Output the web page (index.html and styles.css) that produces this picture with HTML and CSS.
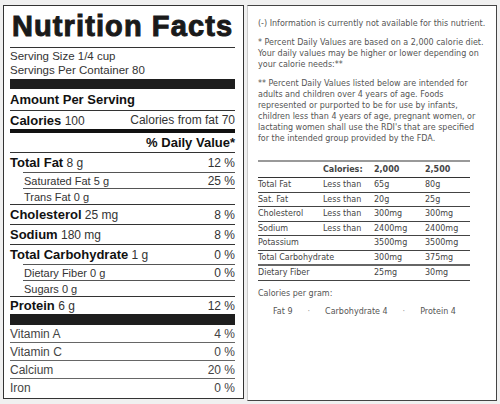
FILE: index.html
```html
<!DOCTYPE html>
<html lang="en">
<head>
    <meta charset="UTF-8">
    <meta name="viewport" content="width=device-width, initial-scale=1.0">
    <title>Nutrition Facts</title>
    <link rel="stylesheet" href="styles.css">
</head>
<body>
    <div class="page">
        <div class="label">
            <h1 class="title">Nutrition Facts</h1>
            <div class="serving">
                <div>Serving Size 1/4 cup</div>
                <div>Servings Per Container 80</div>
            </div>
            <div class="bar"></div>
            <div class="row amount"><b>Amount Per Serving</b></div>
            <div class="row calories">
                <span><b>Calories</b> 100</span>
                <span>Calories from fat 70</span>
            </div>
            <div class="row dv"><b>% Daily Value*</b></div>
            <div class="row main"><span><b>Total Fat</b> 8 g</span><span>12 %</span></div>
            <div class="row sub"><span>Saturated Fat 5 g</span><span>25 %</span></div>
            <div class="row sub"><span>Trans Fat 0 g</span></div>
            <div class="row main full"><span><b>Cholesterol</b> 25 mg</span><span>8 %</span></div>
            <div class="row main"><span><b>Sodium</b> 180 mg</span><span>8 %</span></div>
            <div class="row main"><span><b>Total Carbohydrate</b> 1 g</span><span>0 %</span></div>
            <div class="row sub"><span>Dietary Fiber 0 g</span><span>0 %</span></div>
            <div class="row sub"><span>Sugars 0 g</span></div>
            <div class="row main protein"><span><b>Protein</b> 6 g</span><span>12 %</span></div>
            <div class="bar thick"></div>
            <div class="row vit first"><span>Vitamin A</span><span>4 %</span></div>
            <div class="row vit"><span>Vitamin C</span><span>0 %</span></div>
            <div class="row vit"><span>Calcium</span><span>20 %</span></div>
            <div class="row vit"><span>Iron</span><span>0 %</span></div>
        </div>

        <div class="notes">
            <p>(-) Information is currently not available for this nutrient.</p>
            <p>* Percent Daily Values are based on a 2,000 calorie diet.<br>
               Your daily values may be higher or lower depending on<br>
               your calorie needs:**</p>
            <p>** Percent Daily Values listed below are intended for<br>
               adults and children over 4 years of age. Foods<br>
               represented or purported to be for use by infants,<br>
               children less than 4 years of age, pregnant women, or<br>
               lactating women shall use the RDI's that are specified<br>
               for the intended group provided by the FDA.</p>
            <table class="dv-table">
                <thead>
                    <tr>
                        <th class="c1"></th>
                        <th class="c2">Calories:</th>
                        <th class="c3">2,000</th>
                        <th class="c4">2,500</th>
                    </tr>
                </thead>
                <tbody>
                    <tr><td>Total Fat</td><td>Less than</td><td>65g</td><td>80g</td></tr>
                    <tr><td>Sat. Fat</td><td>Less than</td><td>20g</td><td>25g</td></tr>
                    <tr><td>Cholesterol</td><td>Less than</td><td>300mg</td><td>300mg</td></tr>
                    <tr><td>Sodium</td><td>Less than</td><td>2400mg</td><td>2400mg</td></tr>
                    <tr><td>Potassium</td><td></td><td>3500mg</td><td>3500mg</td></tr>
                    <tr class="heavy"><td>Total Carbohydrate</td><td></td><td>300mg</td><td>375mg</td></tr>
                    <tr><td>Dietary Fiber</td><td></td><td>25mg</td><td>30mg</td></tr>
                </tbody>
            </table>
            <p class="per-gram">Calories per gram:</p>
            <div class="gram-list">
                <span>Fat 9</span>
                <span class="dot">&middot;</span>
                <span>Carbohydrate 4</span>
                <span class="dot">&middot;</span>
                <span>Protein 4</span>
            </div>
        </div>
    </div>
</body>
</html>
```

FILE: styles.css
```css
body {
    margin: 0;
    background-color: #f0f0f0;
    font-family: "Liberation Sans", Arial, sans-serif;
    color: #333;
}
.page {
    display: flex;
    gap: 3px;
    padding: 5px 0 0 3px;
}
.label {
    width: 225px;
    height: 392px;
    padding: 0 8px 0 6px;
    background-color: #fff;
    border: 1px solid #333;
}
.title {
    margin: 0;
    height: 41px;
    padding-left: 2px;
    line-height: 41px;
    border-bottom: 1px solid #333;
    font-size: 29px;
    font-weight: bold;
    letter-spacing: 1.1px;
    color: #1a1a1a;
    -webkit-text-stroke: 1px #1a1a1a;
    white-space: nowrap;
}
.serving {
    padding: 1px 0 2px;
    font-size: 11.5px;
    line-height: 14px;
    color: #333;
}
.bar {
    height: 10px;
    background-color: #1e1e1e;
}
.bar.thick {
    height: 11px;
}
.row {
    display: flex;
    justify-content: space-between;
    align-items: center;
    font-size: 12px;
    color: #333;
    white-space: nowrap;
}
.row b {
    font-size: 13px;
    color: #111;
}
.amount {
    height: 21px;
}
.calories {
    height: 18px;
    border-top: 1px solid #333;
}
.dv {
    height: 19px;
    justify-content: flex-end;
    border-top: 4px solid #111;
}
.main {
    height: 19px;
    border-top: 1px solid #333;
}
.main.protein {
    height: 17px;
}
.sub {
    height: 15px;
    margin-left: 13px;
    padding-left: 1px;
    font-size: 11px;
    border-top: 1px solid #555;
}
.sub span + span {
    font-size: 12px;
}
.vit {
    height: 17px;
    font-size: 12px;
    color: #444;
    border-top: 1px solid #666;
}
.vit.first {
    border-top: none;
}
.notes {
    width: 228px;
    height: 382px;
    padding: 12px 10px 0 10px;
    background-color: #fff;
    border: 1px solid #444;
    border-left-color: #ccc;
    font-family: "DejaVu Sans", Verdana, sans-serif;
    font-size: 8px;
    line-height: 11px;
    color: #555;
    white-space: nowrap;
}
.notes p {
    margin: 0 0 8px;
}
.dv-table {
    width: 212px;
    margin-top: 16px;
    table-layout: fixed;
    border-collapse: collapse;
    border-top: 2px solid #999;
    color: #444;
}
.dv-table th, .dv-table td {
    padding: 0;
    text-align: left;
    overflow: visible;
}
.dv-table th {
    height: 15px;
    font-weight: bold;
    border-bottom: 1px solid #333;
}
.dv-table td {
    height: 13.5px;
    border-bottom: 1px solid #444;
}
.dv-table tr.heavy td {
    border-bottom: 2px solid #666;
}
.c1 { width: 65px; }
.c2 { width: 51px; }
.c3 { width: 51px; }
.c4 { width: 45px; }
.notes p.per-gram {
    margin: 7px 0 0;
}
.gram-list {
    display: flex;
    gap: 15px;
    margin-top: 7px;
    padding-left: 15px;
}
.gram-list .dot {
    color: #999;
}
```
